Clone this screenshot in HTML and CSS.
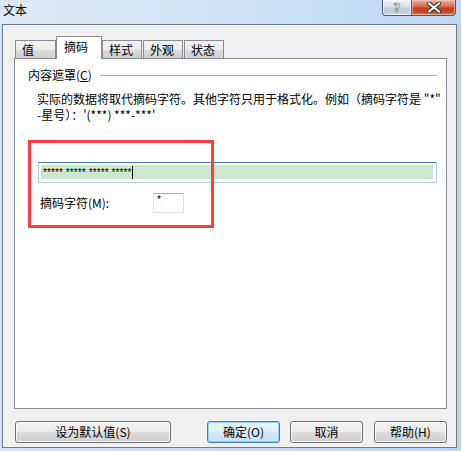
FILE: index.html
```html
<!DOCTYPE html>
<html lang="zh">
<head>
<meta charset="utf-8">
<title>文本</title>
<link rel="stylesheet" href="styles.css">
</head>
<body>
<div class="window">
  <div class="titlebar">
    <span class="title">文本</span>
    <div class="caption">
      <div class="cap-btn help">?</div>
      <div class="cap-btn close">
        <svg width="16" height="11" viewBox="0 0 16 11">
          <path d="M3 1.5 L13 9.5 M13 1.5 L3 9.5" stroke="#3b3b3b" stroke-width="4.2" stroke-linecap="round"/>
          <path d="M3 1.5 L13 9.5 M13 1.5 L3 9.5" stroke="#ffffff" stroke-width="2.2" stroke-linecap="round"/>
        </svg>
      </div>
    </div>
  </div>
  <div class="client">
    <div class="tabs">
      <div class="tab">值</div>
      <div class="tab active">摘码</div>
      <div class="tab">样式</div>
      <div class="tab">外观</div>
      <div class="tab">状态</div>
    </div>
    <div class="panel">
      <div class="group-head"><span class="group-label">内容遮罩(<u>C</u>)</span><span class="rule"></span></div>
      <p class="desc"><span class="line">实际的数据将取代摘码字符。其他字符只用于格式化。例如（摘码字符是 "*"</span><span class="line">-星号）：'(***) ***-***'</span></p>
      <div class="mask-field"><div class="mask-inner"><span class="stars">***** ***** ***** *****</span><span class="caret"></span></div></div>
      <div class="char-row"><span class="char-label">摘码字符(M):</span><div class="char-box">*</div></div>
    </div>
    <div class="actions">
      <button class="btn wide">设为默认值(S)</button>
      <div class="btn-group">
        <button class="btn default">确定(O)</button>
        <button class="btn">取消</button>
        <button class="btn help-btn">帮助(H)</button>
      </div>
    </div>
  </div>
  <div class="annot"></div>
</div>
</body>
</html>
```
FILE: styles.css
```css
* { box-sizing: border-box; }
html, body { margin: 0; padding: 0; }
body {
  width: 461px;
  height: 451px;
  overflow: hidden;
  font-family: "Noto Sans CJK SC", "Liberation Sans", sans-serif;
  font-size: 12px;
  color: #000;
}
.window {
  position: relative;
  width: 461px;
  height: 451px;
  display: flex;
  flex-direction: column;
  background: linear-gradient(90deg, #d3e2f1 0%, #c8dcef 60%, #bcd6ee 100%);
}
.titlebar {
  height: 24px;
  display: flex;
  align-items: flex-start;
  padding-left: 3px;
  background: linear-gradient(90deg, #dde9f5 0%, #cfe1f2 50%, #bfdaf3 100%);
}
.title {
  margin-top: 3px;
  line-height: 14px;
  font-size: 12px;
}
.caption {
  margin-left: auto;
  margin-right: 5px;
  display: flex;
  height: 16px;
}
.cap-btn {
  height: 16px;
  border: 1px solid #4f5d70;
  border-top: none;
  display: flex;
  align-items: center;
  justify-content: center;
}
.help {
  width: 29px;
  border-right: none;
  border-radius: 0 0 0 4px;
  background: linear-gradient(180deg, #eef2f7 0%, #d6dfe9 45%, #c0ccd9 55%, #cad6e3 100%);
  color: #ffffff;
  font-family: "DejaVu Sans", sans-serif;
  font-weight: bold;
  font-size: 12px;
  line-height: 14px;
  -webkit-text-stroke: 0.6px #5a6676;
  box-shadow: inset 0 0 0 1px rgba(255,255,255,0.6);
}
.close {
  width: 45px;
  border-radius: 0 0 4px 0;
  background: linear-gradient(180deg, #eab3a6 0%, #d8735d 40%, #c2401f 55%, #c8492b 80%, #dd7a5b 100%);
  box-shadow: inset 0 0 0 1px rgba(255,210,200,0.55);
}
.close svg { display: block; }

.client {
  flex: 1;
  margin: 0 4px 3px 2px;
  border: 1px solid #6f7b8a;
  background: #f0f0f0;
  display: flex;
  flex-direction: column;
  padding: 11px 9px 4px 11px;
}
.tabs {
  height: 22px;
  display: flex;
  align-items: flex-end;
  padding-left: 1px;
}
.tab {
  width: 40px;
  height: 18px;
  padding-left: 6px;
  border: 1px solid #898c95;
  border-bottom: none;
  margin-right: 1px;
  background: linear-gradient(180deg, #f2f2f2 0%, #ebebeb 50%, #dddddd 51%, #cfcfcf 100%);
  line-height: 17px;
  white-space: nowrap;
}
.tab:first-child { width: 41px; }
.tab.active {
  width: 46px;
  height: 23px;
  margin: 0 0 -1px -1px;
  padding-left: 7px;
  background: #ffffff;
  position: relative;
  z-index: 1;
  line-height: 19px;
}
.panel {
  height: 351px;
  border: 1px solid #898c95;
  background: #ffffff;
  display: flex;
  flex-direction: column;
}
.group-head {
  margin: 9px 9px 0 13px;
  height: 14px;
  display: flex;
  align-items: center;
  gap: 8px;
}
.group-label { line-height: 14px; white-space: nowrap; }
.group-label u { text-decoration: underline; }
.rule {
  flex: 1;
  height: 1px;
  background: #a8a8a8;
}
.desc {
  margin: 9px 0 0 22px;
  display: flex;
  flex-direction: column;
  white-space: nowrap;
}
.desc .line {
  display: block;
  height: 16px;
  line-height: 16px;
}
.mask-field {
  margin: 39px 0 0 23px;
  width: 399px;
  height: 21px;
  border: 1px solid #b2cde6;
  border-top-color: #3d7bad;
  padding: 2px 3px 2px 2px;
  background: #ffffff;
}
.mask-inner {
  height: 14px;
  background: #cde8d0;
  display: flex;
  align-items: center;
  padding-left: 2px;
}
.stars {
  font-family: "Liberation Sans", sans-serif;
  font-size: 10px;
  line-height: 14px;
  white-space: pre;
  margin-top: 1px;
  letter-spacing: 0.1px;
}
.caret {
  width: 1px;
  height: 13px;
  background: #000;
  margin-left: 1px;
}
.char-row {
  margin: 10px 0 0 25px;
  display: flex;
  align-items: center;
  height: 20px;
}
.char-label {
  width: 113px;
  line-height: 14px;
}
.char-box {
  width: 31px;
  height: 20px;
  border: 1px solid #dbdfe6;
  border-top-color: #abadb3;
  border-left-color: #e2e3ea;
  font-family: "Liberation Sans", sans-serif;
  font-size: 10px;
  line-height: 12px;
  padding-left: 3px;
  background: #fff;
}
.actions {
  margin-top: 12px;
  height: 22px;
  display: flex;
  padding-left: 1px;
}
.btn-group {
  margin-left: auto;
  display: flex;
  gap: 10px;
}
.btn {
  width: 73px;
  height: 22px;
  border: 1px solid #707070;
  border-radius: 3px;
  background: linear-gradient(180deg, #f2f2f2 0%, #ebebeb 50%, #dddddd 51%, #cfcfcf 100%);
  box-shadow: inset 0 0 0 1px rgba(255,255,255,0.8);
  font-family: "Noto Sans CJK SC", "Liberation Sans", sans-serif;
  font-size: 12px;
  line-height: 18px;
  padding: 0;
  color: #000;
}
.btn.wide { width: 156px; }
.btn.default {
  border-color: #3c7fb1;
  background: linear-gradient(180deg, #eef6fc 0%, #e1effa 50%, #d2e7f7 51%, #c6e0f4 100%);
  box-shadow: inset 0 0 0 1px #8fd6f6;
}
.help-btn { margin-left: 1px; }
.annot {
  position: absolute;
  left: 28px;
  top: 140px;
  width: 186px;
  height: 88px;
  border: 3px solid #ff3d3d;
  pointer-events: none;
}
```
